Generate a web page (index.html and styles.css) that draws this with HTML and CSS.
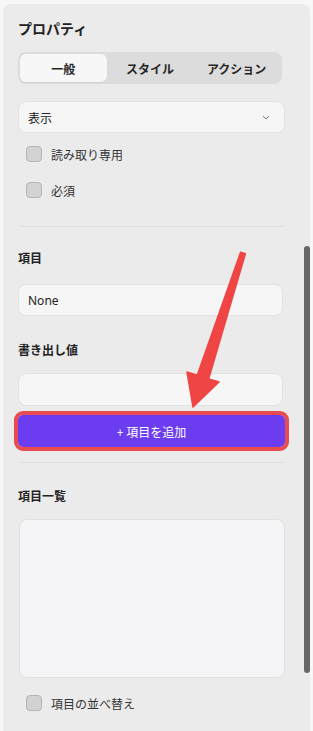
FILE: index.html
```html
<!DOCTYPE html>
<html lang="ja">
<head>
<meta charset="utf-8">
<title>プロパティ</title>
<link rel="stylesheet" href="styles.css">
</head>
<body>
<div class="panel">
  <h2 class="title">プロパティ</h2>
  <div class="tabs">
    <div class="tab active">一般</div>
    <div class="tab">スタイル</div>
    <div class="tab">アクション</div>
  </div>
  <div class="select">
    <span>表示</span>
    <svg class="chev" width="8" height="5" viewBox="0 0 8 5"><path d="M1 1 L4 4 L7 1" fill="none" stroke="#777" stroke-width="1"/></svg>
  </div>
  <label class="check first"><span class="box"></span><span>読み取り専用</span></label>
  <label class="check"><span class="box"></span><span>必須</span></label>
  <div class="divider d1"></div>
  <div class="label l1">項目</div>
  <div class="input i1">None</div>
  <div class="label l2">書き出し値</div>
  <div class="input i2"></div>
  <button class="add">+ 項目を追加</button>
  <div class="divider d2"></div>
  <div class="label l3">項目一覧</div>
  <div class="list"></div>
  <label class="check last"><span class="box"></span><span>項目の並べ替え</span></label>
  <div class="scrollbar"></div>
</div>
<svg class="arrow" width="313" height="731" viewBox="0 0 313 731">
  <polygon points="240.6,252.2 245.4,253.8 208.7,378.9 219,382 193,407 187,372 197.3,375.1" fill="#f04545" stroke="#f04545" stroke-width="1.5" stroke-linejoin="round"/>
</svg>
</body>
</html>
```

FILE: styles.css
```css
html, body {
  margin: 0;
  padding: 0;
}
body {
  background: #f7f7f7;
  font-family: "Noto Sans CJK JP", "Noto Sans", sans-serif;
  color: #222;
  width: 313px;
  height: 731px;
  overflow: hidden;
  position: relative;
}
.panel {
  position: relative;
  margin: 4px 0 0 3px;
  width: 307px;
  height: 727px;
  box-sizing: border-box;
  background: #ebebeb;
  border-radius: 8px 8px 0 0;
  padding: 14px 25px 0 15px;
  display: flex;
  flex-direction: column;
}
.title {
  margin: 0;
  font-size: 14px;
  line-height: 20px;
  font-weight: 700;
  color: #222;
}
.tabs {
  margin-top: 14px;
  width: 264px;
  height: 32px;
  box-sizing: border-box;
  padding: 2px;
  background: #dcdcdc;
  border-radius: 8px;
  display: grid;
  grid-template-columns: 1fr 1fr 1fr;
}
.tab {
  display: flex;
  align-items: center;
  justify-content: center;
  font-size: 12px;
  font-weight: 700;
  color: #262626;
  border-radius: 6px;
}
.tab.active {
  background: #f7f7f7;
  box-shadow: 0 1px 1px rgba(0,0,0,0.04);
}
.select {
  margin-top: 17px;
  width: 267px;
  height: 32px;
  box-sizing: border-box;
  background: #f6f6f6;
  border: 1px solid #e2e2e2;
  border-radius: 8px;
  padding: 0 14px 0 9px;
  display: flex;
  align-items: center;
  justify-content: space-between;
  font-size: 12px;
  color: #222;
}
.check {
  height: 36px;
  display: flex;
  align-items: center;
  gap: 9px;
  padding-left: 8px;
  font-size: 12px;
  color: #333;
}
.check.first { margin-top: 3px; }
.check.last { margin-top: 7px; }
.box {
  width: 16px;
  height: 16px;
  box-sizing: border-box;
  background: #d2d2d2;
  border: 1px solid #b4b4b4;
  border-radius: 4px;
  flex: none;
}
.divider {
  width: 264px;
  height: 1px;
  margin-left: 2px;
  background: #dedede;
}
.d1 { margin-top: 18px; }
.d2 { margin-top: 15px; }
.label {
  font-size: 12px;
  line-height: 20px;
  font-weight: 700;
  color: #222;
}
.l1 { margin-top: 21px; }
.l2 { margin-top: 24px; }
.l3 { margin-top: 23px; }
.input {
  width: 265px;
  box-sizing: border-box;
  background: #f6f6f6;
  border: 1px solid #e2e2e2;
  border-radius: 8px;
  padding-left: 9px;
  display: flex;
  align-items: center;
  font-family: "Noto Sans", sans-serif;
  font-size: 12px;
  color: #222;
}
.i1 { margin-top: 16px; height: 32px; }
.i2 { margin-top: 13px; height: 33px; }
.add {
  margin-top: 9px;
  width: 267px;
  height: 32px;
  border: none;
  border-radius: 5px;
  background: #6b3cf0;
  color: #fff;
  font-family: "Noto Sans CJK JP", "Noto Sans", sans-serif;
  font-size: 12px;
  outline: 4px solid #e84b50;
  outline-offset: 0;
  padding: 0;
}
.list {
  margin-top: 13px;
  margin-left: 1px;
  width: 266px;
  height: 159px;
  box-sizing: border-box;
  background: #f5f4f7;
  border: 1px solid #e0e0e0;
  border-radius: 8px;
}
.scrollbar {
  position: absolute;
  left: 301px;
  top: 242px;
  width: 6px;
  height: 427px;
  background: #676767;
  border-radius: 3px;
}
.arrow {
  position: absolute;
  left: 0;
  top: 0;
  pointer-events: none;
}
```
